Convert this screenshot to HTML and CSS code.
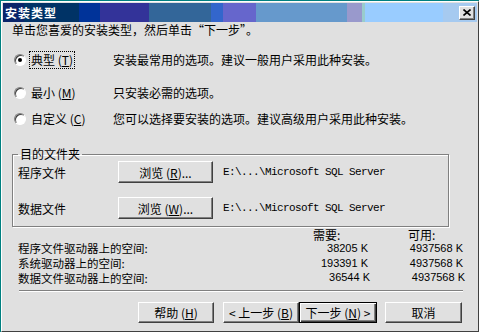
FILE: index.html
```html
<!DOCTYPE html>
<html lang="zh-CN">
<head>
    <meta charset="UTF-8">
    <title>安装类型</title>
    <link rel="stylesheet" href="styles.css">
</head>
<body>
    <div class="window">
        <div class="titlebar">
            <span class="title">安装类型</span>
            <span class="close">
                <svg width="8" height="7" viewBox="0 0 8 7"><path d="M0.5 0.5L7.5 6.5M7.5 0.5L0.5 6.5" stroke="#000" stroke-width="1.6" fill="none"/></svg>
            </span>
        </div>
        <p class="intro">单击您喜爱的安装类型，然后单击“下一步”。</p>

        <div class="option first">
            <span class="radio checked"></span>
            <span class="opt-label"><span class="focus">典型 (<u>T</u>)</span></span>
            <span class="opt-desc">安装最常用的选项。建议一般用户采用此种安装。</span>
        </div>
        <div class="option second">
            <span class="radio"></span>
            <span class="opt-label">最小 (<u>M</u>)</span>
            <span class="opt-desc">只安装必需的选项。</span>
        </div>
        <div class="option third">
            <span class="radio"></span>
            <span class="opt-label">自定义 (<u>C</u>)</span>
            <span class="opt-desc">您可以选择要安装的选项。建议高级用户采用此种安装。</span>
        </div>

        <fieldset class="group">
            <legend>目的文件夹</legend>
            <div class="folder-row">
                <span class="folder-label">程序文件</span>
                <button class="btn browse">浏览 (<u>R</u>)...</button>
                <span class="path">E:\...\Microsoft SQL Server</span>
            </div>
            <div class="folder-row second-row">
                <span class="folder-label">数据文件</span>
                <button class="btn browse">浏览 (<u>W</u>)...</button>
                <span class="path">E:\...\Microsoft SQL Server</span>
            </div>
        </fieldset>

        <div class="space">
            <span></span>
            <span class="col-head need">需要:</span>
            <span class="col-head avail">可用:</span>

            <span class="space-label">程序文件驱动器上的空间:</span>
            <span class="num">38205 K</span>
            <span class="num">4937568 K</span>

            <span class="space-label">系统驱动器上的空间:</span>
            <span class="num">193391 K</span>
            <span class="num">4937568 K</span>

            <span class="space-label">数据文件驱动器上的空间:</span>
            <span class="num shift">36544 K</span>
            <span class="num shift">4937568 K</span>
        </div>

        <div class="separator"></div>

        <div class="buttons">
            <button class="btn help">帮助 (<u>H</u>)</button>
            <button class="btn back">&lt; 上一步 (<u>B</u>)</button>
            <button class="btn next default">下一步 (<u>N</u>) &gt;</button>
            <button class="btn cancel">取消</button>
        </div>
    </div>
</body>
</html>
```

FILE: styles.css
```css
body {
    margin: 0;
    background: #008080;
    font-family: "Noto Sans CJK SC", "Liberation Sans", sans-serif;
    font-size: 12px;
    color: #000;
}
.window {
    box-sizing: border-box;
    width: 478px;
    height: 331px;
    margin: 1px 0 0 1px;
    padding: 1px;
    background: #e0e0e0;
    border: 1px solid;
    border-color: #fff #404040 #404040 #fff;
}
.titlebar {
    display: flex;
    align-items: center;
    justify-content: space-between;
    height: 19px;
    background: linear-gradient(to right,
        #0a246a 0, #0a246a 21px,
        #003366 21px, #003366 76px,
        #003399 76px, #003399 97px,
        #333399 97px, #333399 146px,
        #336699 146px, #336699 208px,
        #3366cc 208px, #3366cc 220px,
        #6666cc 220px, #6666cc 253px,
        #6699cc 253px, #6699cc 344px,
        #9999cc 344px, #9999cc 359px,
        #99cccc 359px, #99cccc 362px,
        #99ccff 362px, #99ccff 440px,
        #a6caf0 440px);
}
.title {
    padding-left: 2px;
    color: #fff;
    font-weight: bold;
    letter-spacing: 1px;
    line-height: 19px;
}
.close {
    box-sizing: border-box;
    display: flex;
    align-items: center;
    justify-content: center;
    width: 16px;
    height: 14px;
    margin-right: 2px;
    background: #e0e0e0;
    border: 1px solid;
    border-color: #fff #404040 #404040 #fff;
    box-shadow: inset -1px -1px #808080;
}
.intro {
    margin: 1px 0 0 9px;
    line-height: 14px;
}
.option {
    display: grid;
    grid-template-columns: 15px 84px auto;
    align-items: center;
    height: 17px;
    margin-left: 11px;
    line-height: 14px;
}
.option.first {
    margin-top: 14px;
}
.option.second {
    margin-top: 16px;
}
.option.third {
    margin-top: 9px;
}
.radio {
    box-sizing: border-box;
    position: relative;
    width: 12px;
    height: 12px;
    border-radius: 50%;
    background: #fff;
    border: 1px solid;
    border-color: #808080 #fff #fff #808080;
    box-shadow: inset 1px 1px #404040;
}
.radio.checked::after {
    content: "";
    position: absolute;
    left: 3px;
    top: 3px;
    width: 4px;
    height: 4px;
    border-radius: 50%;
    background: #000;
}
.opt-label {
    padding-left: 2px;
}
.focus {
    display: inline-block;
    margin-left: -2px;
    padding: 1px 1px;
    border: 1px dotted #000;
}
.group {
    width: 437px;
    box-sizing: border-box;
    margin: 20px 0 0 9px;
    padding: 0 5px 7px 5px;
    border: 1px solid #808080;
    box-shadow: inset 1px 1px #fff, 1px 1px #fff;
}
.group legend {
    padding: 0 2px;
    line-height: 14px;
}
.folder-row {
    display: flex;
    align-items: center;
    height: 22px;
}
.folder-row.second-row {
    margin-top: 14px;
}
.folder-label {
    width: 100px;
}
.btn {
    box-sizing: border-box;
    height: 21px;
    padding: 0;
    background: #e0e0e0;
    font-family: "Noto Sans CJK SC", "Liberation Sans", sans-serif;
    font-size: 12px;
    color: #000;
    border: 1px solid;
    border-color: #fff #404040 #404040 #fff;
    box-shadow: inset -1px -1px #808080;
}
.browse {
    width: 95px;
    height: 22px;
}
.path {
    margin-left: 10px;
    font-family: "Liberation Mono", monospace;
    font-size: 11px;
    letter-spacing: -0.6px;
}
.space {
    display: grid;
    grid-template-columns: 280px 70px 95px;
    grid-template-rows: 13px 15px 15px 15px;
    align-items: center;
    margin: 1px 0 0 15px;
    line-height: 15px;
}
.col-head {
    line-height: 13px;
}
.col-head.need {
    padding-left: 15px;
}
.col-head.avail {
    padding-left: 40px;
}
.space-label {
    font-size: 11.5px;
}
.num {
    text-align: right;
    font-family: "Liberation Sans", sans-serif;
    font-size: 11px;
}
.num.shift {
    transform: translate(2px, -1px);
}
.separator {
    width: 444px;
    height: 1px;
    margin: 4px 0 0 16px;
    background: #808080;
    border-bottom: 1px solid #fff;
}
.buttons {
    display: flex;
    margin: 10px 0 0 135px;
}
.help {
    width: 76px;
}
.back {
    width: 76px;
    margin-left: 9px;
}
.next {
    width: 78px;
}
.btn.default {
    border-color: #000;
    box-shadow: inset 1px 1px #fff, inset -1px -1px #404040, inset -2px -2px #808080;
}
.cancel {
    width: 77px;
    margin-left: 8px;
}
```
